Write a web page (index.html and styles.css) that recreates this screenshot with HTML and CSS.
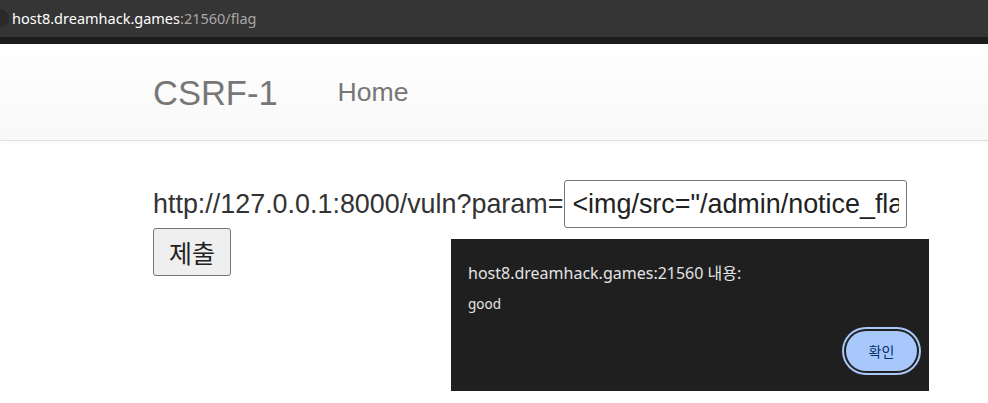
FILE: index.html
```html
<!DOCTYPE html>
<html lang="ko">
<head>
    <meta charset="UTF-8">
    <title>CSRF-1</title>
    <link rel="stylesheet" href="styles.css">
</head>
<body>
    <div class="addressbar">
        <span class="site-icon"></span>
        <span class="url"><span class="host">host8.dreamhack.games</span>:21560/flag</span>
    </div>
    <div class="chrome-edge"></div>

    <nav class="navbar">
        <div class="navbar-inner">
            <a class="brand" href="#">CSRF-1</a>
            <a class="nav-link" href="#">Home</a>
        </div>
    </nav>

    <div class="container">
        <form class="flag-form">
            <div class="param-row">
                <span class="param-label">http://127.0.0.1:8000/vuln?param=</span>
                <input type="text" class="param-input" value='&lt;img/src="/admin/notice_flag?userid=admin"&gt;'>
            </div>
            <button type="button" class="submit-btn">제출</button>
        </form>
    </div>

    <div class="alert-dialog">
        <div class="alert-title">host8.dreamhack.games:21560 내용:</div>
        <div class="alert-message">good</div>
        <div class="alert-actions">
            <button type="button" class="alert-ok">확인</button>
        </div>
    </div>
</body>
</html>
```

FILE: styles.css
```css
* {
    margin: 0;
    padding: 0;
    box-sizing: border-box;
}

body {
    font-family: "Liberation Sans", Arial, sans-serif;
    background: #fff;
    width: 988px;
    height: 403px;
    overflow: hidden;
    position: relative;
}

/* browser chrome */
.addressbar {
    height: 37px;
    background: #353535;
    display: flex;
    align-items: center;
    position: relative;
    padding-left: 12px;
}

.site-icon {
    position: absolute;
    left: -9px;
    top: 9px;
    width: 18px;
    height: 18px;
    border-radius: 50%;
    background: #2a2a2a;
}

.url {
    font-family: "Noto Sans", "Open Sans", sans-serif;
    font-size: 14.5px;
    color: #a8a8a8;
    margin-top: -2px;
}

.url .host {
    color: #fff;
}

.chrome-edge {
    height: 7px;
    background: #1d1d1d;
}

/* navbar */
.navbar {
    height: 97px;
    background: linear-gradient(to bottom, #fff 0%, #f8f8f8 100%);
    border-bottom: 1px solid #e2e2e2;
    box-shadow: 0 1px 6px rgba(0,0,0,0.04);
}

.navbar-inner {
    padding-left: 153px;
    display: flex;
    align-items: center;
    height: 96px;
}

.brand {
    font-size: 34.5px;
    color: #777;
    text-decoration: none;
    margin-top: 3px;
}

.nav-link {
    font-size: 26.6px;
    color: #777;
    text-decoration: none;
    margin-left: 60px;
    margin-top: 1px;
}

/* content */
.container {
    padding: 39px 0 0 153px;
}

.param-row {
    display: flex;
    align-items: center;
    height: 48px;
}

.param-label {
    font-size: 26.9px;
    color: #333;
}

.param-input {
    width: 343px;
    height: 48px;
    margin-left: 1px;
    padding: 0 7px;
    font-family: "Liberation Sans", Arial, sans-serif;
    font-size: 26.9px;
    color: #222;
    border: 1px solid #767676;
    border-radius: 3px;
    background: #fff;
}

.submit-btn {
    width: 78px;
    height: 48px;
    font-family: "Noto Sans CJK KR", sans-serif;
    font-size: 25px;
    color: #222;
    background: #efefef;
    border: 1px solid #767676;
    border-radius: 3px;
}

/* alert */
.alert-dialog {
    position: absolute;
    left: 451px;
    top: 239px;
    width: 478px;
    height: 152px;
    background: #1f1f1f;
    padding: 21px 0 0 17px;
    font-family: "Noto Sans", "Noto Sans CJK KR", sans-serif;
}

.alert-title {
    font-size: 16px;
    color: #e3e3e3;
}

.alert-message {
    font-size: 13.5px;
    color: #e3e3e3;
    margin-top: 11px;
}

.alert-actions {
    display: flex;
    justify-content: flex-end;
    margin-top: 18px;
    padding-right: 12px;
}

.alert-ok {
    width: 71px;
    height: 40px;
    border-radius: 20px;
    border: none;
    background: #a8c7fa;
    color: #062e6f;
    font-family: "Noto Sans CJK KR", sans-serif;
    font-size: 14px;
    box-shadow: 0 0 0 2px #1f1f1f, 0 0 0 4px #a8c7fa;
}
```
